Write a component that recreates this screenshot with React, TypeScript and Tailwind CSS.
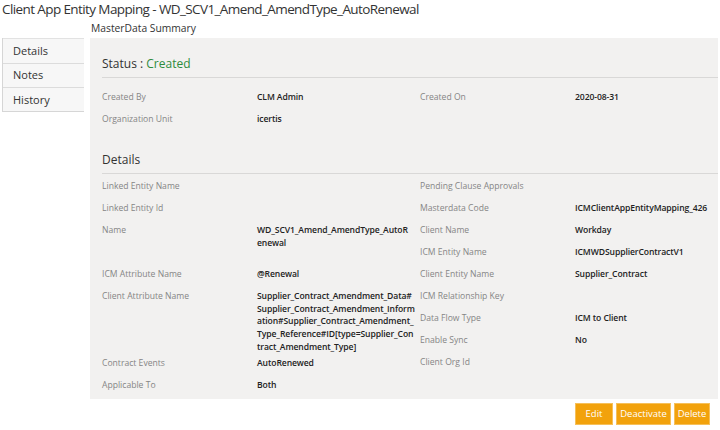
import React from "react";

interface Field {
  label: string,
  value?: string[],
  h?: number,
}

const leftFields: Field[] = [
  { label: "Linked Entity Name" },
  { label: "Linked Entity Id" },
  { label: "Name", value: ["WD_SCV1_Amend_AmendType_AutoR", "enewal"], h: 44 },
  { label: "ICM Attribute Name", value: ["@Renewal"] },
  {
    label: "Client Attribute Name",
    value: [
      "Supplier_Contract_Amendment_Data#",
      "Supplier_Contract_Amendment_Inform",
      "ation#Supplier_Contract_Amendment_",
      "Type_Reference#ID[type=Supplier_Con",
      "tract_Amendment_Type]",
    ],
    h: 67,
  },
  { label: "Contract Events", value: ["AutoRenewed"] },
  { label: "Applicable To", value: ["Both"] },
];

const rightFields: Field[] = [
  { label: "Pending Clause Approvals" },
  { label: "Masterdata Code", value: ["ICMClientAppEntityMapping_426"] },
  { label: "Client Name", value: ["Workday"] },
  { label: "ICM Entity Name", value: ["ICMWDSupplierContractV1"] },
  { label: "Client Entity Name", value: ["Supplier_Contract"] },
  { label: "ICM Relationship Key" },
  { label: "Data Flow Type", value: ["ICM to Client"] },
  { label: "Enable Sync", value: ["No"] },
  { label: "Client Org Id" },
];

const FieldRow: React.FC<{ field: Field }> = ({ field }) => (
  <div className="flex pt-[4px]" style={{ height: field.h ?? 22 }}>
    <div className="w-[155px] shrink-0 text-[#858585]">{field.label}</div>
    <div className="whitespace-nowrap font-semibold tracking-[-0.1px] text-[#222]">
      {field.value?.map((line) => <div key={line}>{line}</div>)}
    </div>
  </div>
);

const SectionTitle: React.FC<{ children: React.ReactNode }> = ({ children }) => (
  <div className="border-b border-[#d9d8d7] pb-[5px] text-[12px] leading-[16px] text-[#333]">{children}</div>
);

const buttons = [
  { label: "Edit", w: "w-[38px]" },
  { label: "Deactivate", w: "w-[55px]" },
  { label: "Delete", w: "w-[36px]" },
];

export default function App() {
  return (
    <div
      className="h-[430px] w-[720px] overflow-hidden bg-white text-[#333]"
      style={{ fontFamily: "'Open Sans', 'Noto Sans', sans-serif" }}
    >
      <h1 className="pl-[2px] text-[13.5px] leading-[19px] tracking-[-0.6px] text-[#333]">
        Client App Entity Mapping - WD_SCV1_Amend_AmendType_AutoRenewal
      </h1>
      <div className="flex">
        <ul className="ml-[2px] mt-[19px] h-[74px] w-[82px] border-b border-l border-[#d6d6d6] bg-[#f7f7f7] text-[11px] text-[#333]">
          {["Details", "Notes", "History"].map((item, i) => (
            <li
              key={item}
              className={`flex h-[24.5px] items-center pl-[10px] ${i > 0 ? "border-t border-[#dcdcdc]" : "border-t border-[#e2e2e2]"}`}
            >
              {item}
            </li>
          ))}
        </ul>
        <div className="ml-[6px] flex-1">
          <div className="pl-[1px] text-[10.3px] leading-[19px] text-[#333]">MasterData Summary</div>
          <div className="mr-[2px] h-[361px] bg-[#f2f1f0] pl-[12px] pt-[18px] text-[8.6px] leading-[12.7px]">
            <SectionTitle>
              Status : <span className="text-[#2e8b3c]">Created</span>
            </SectionTitle>
            <div className="mt-[9px] flex">
              <div className="w-[318px]">
                <FieldRow field={{ label: "Created By", value: ["CLM Admin"] }} />
                <FieldRow field={{ label: "Organization Unit", value: ["icertis"] }} />
              </div>
              <div className="flex-1">
                <FieldRow field={{ label: "Created On", value: ["2020-08-31"] }} />
              </div>
            </div>
            <div className="mt-[21px]">
              <SectionTitle>Details</SectionTitle>
            </div>
            <div className="mt-[2px] flex">
              <div className="w-[318px]">
                {leftFields.map((f) => <FieldRow key={f.label} field={f} />)}
              </div>
              <div className="flex-1">
                {rightFields.map((f) => <FieldRow key={f.label} field={f} />)}
              </div>
            </div>
          </div>
          <div className="mr-[10px] mt-[4px] flex justify-end gap-[3px] text-[9.5px] text-white">
            {buttons.map((b) => (
              <button
                key={b.label}
                type="button"
                className={`${b.w} h-[22px] border border-[#f6c05a] bg-[#f2a20c]`}
              >
                {b.label}
              </button>
            ))}
          </div>
        </div>
      </div>
    </div>
  );
}
